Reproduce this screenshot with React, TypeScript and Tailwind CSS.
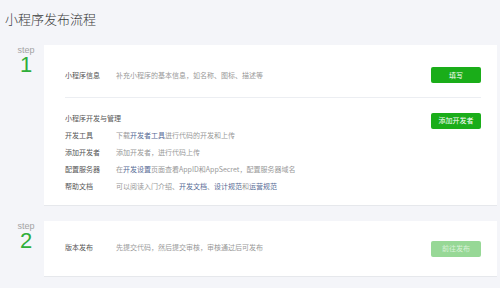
import React from "react";

const cjk = { fontFamily: '"Noto Sans CJK SC", "Noto Sans", sans-serif' };

const Link = ({ children }: { children: React.ReactNode }) => (
  <span className="text-[#576b95]">{children}</span>
);

const StepLabel = ({ n }: { n: number }) => (
  <div className="w-[44px] shrink-0 pl-[8px] text-center font-['Liberation_Sans',sans-serif]">
    <div className="text-[9px] leading-[10px] text-[#a3a3a3]">step</div>
    <div className="text-[22px] leading-[20px] text-[#2fae3a]">{n}</div>
  </div>
);

const GreenButton = ({ label, disabled }: { label: string; disabled?: boolean }) => (
  <button
    className={
      disabled
        ? "w-[50px] h-[16px] rounded-[2px] bg-[#97d896] text-[#d9f2d9] text-[7px] leading-none shrink-0"
        : "w-[50px] h-[16px] rounded-[2px] bg-[#1aad19] text-white text-[7px] leading-none shrink-0"
    }
  >
    {label}
  </button>
);

const devRows: { label: string; value: React.ReactNode }[] = [
  {
    label: "开发工具",
    value: (
      <>
        下载<Link>开发者工具</Link>进行代码的开发和上传
      </>
    ),
  },
  { label: "添加开发者", value: "添加开发者，进行代码上传" },
  {
    label: "配置服务器",
    value: (
      <>
        在<Link>开发设置</Link>页面查看AppID和AppSecret，配置服务器域名
      </>
    ),
  },
  {
    label: "帮助文档",
    value: (
      <>
        可以阅读入门介绍、<Link>开发文档</Link>、<Link>设计规范</Link>和<Link>运营规范</Link>
      </>
    ),
  },
];

export default function App() {
  return (
    <div className="w-[500px] h-[288px] overflow-hidden bg-[#f4f5f9]" style={cjk}>
      <h1 className="pl-[5px] pt-[12px] text-[13px] leading-[13px] text-[#3a3a3a] font-light">
        小程序发布流程
      </h1>

      {/* step 1 */}
      <div className="flex mt-[20px] mr-[3px]">
        <StepLabel n={1} />
        <div className="flex-1 h-[161px] bg-white border-b border-[#e6e8ec] pl-[21px] pr-[16px]">
          <div className="flex items-center justify-between pt-[22px] pb-[14px] text-[7px] leading-[16px]">
            <div className="flex">
              <span className="w-[51px] text-[#555]">小程序信息</span>
              <span className="text-[#999]">补充小程序的基本信息，如名称、图标、描述等</span>
            </div>
            <GreenButton label="填写" />
          </div>
          <div className="h-px bg-[#eceef2]" />
          <div className="flex items-start justify-between pt-[12px] text-[7px] leading-[17px]">
            <div>
              <div className="text-[#555]">小程序开发与管理</div>
              {devRows.map((r) => (
                <div key={r.label} className="flex">
                  <span className="w-[51px] text-[#555]">{r.label}</span>
                  <span className="text-[#999]">{r.value}</span>
                </div>
              ))}
            </div>
            <div className="mt-[2px]">
              <GreenButton label="添加开发者" />
            </div>
          </div>
        </div>
      </div>

      {/* step 2 */}
      <div className="flex mt-[15px] mr-[3px]">
        <StepLabel n={2} />
        <div className="flex-1 h-[56px] bg-white border-b border-[#e6e8ec] pl-[21px] pr-[16px] flex items-center justify-between text-[7px] leading-[16px]">
          <div className="flex -mt-[3px]">
            <span className="w-[51px] text-[#555]">版本发布</span>
            <span className="text-[#999]">先提交代码，然后提交审核，审核通过后可发布</span>
          </div>
          <GreenButton label="前往发布" disabled />
        </div>
      </div>
    </div>
  );
}
